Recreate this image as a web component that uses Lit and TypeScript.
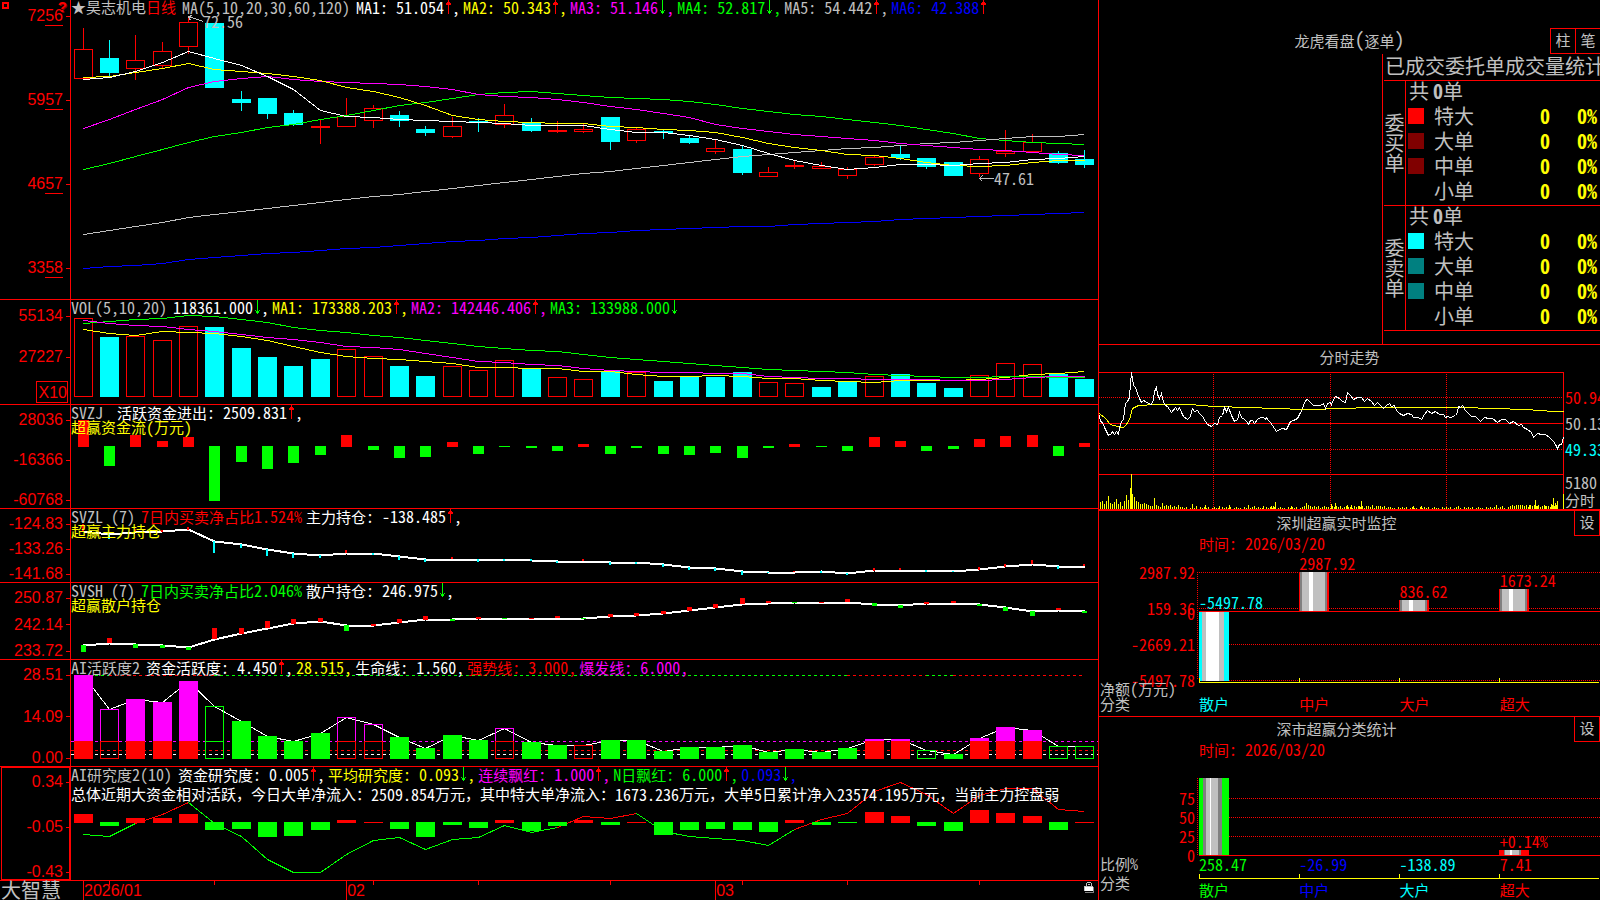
import { LitElement, html, svg, css, nothing } from "lit";
import { customElement, property } from "lit/decorators.js";

const RED = "#f00";
const CYAN = "#0ff";
const GREEN = "#0f0";
const YELLOW = "#ff0";
const MAGENTA = "#f0f";
const WHITE = "#fff";
const GRAY = "#c0c0c0";
const BLUE = "#00f";

/* Shared type styles: CJK runs at 15px, Latin runs in half-width figures. */
const textStyles = css`
  :host {
    font-family: "Noto Sans CJK SC", sans-serif;
    font-size: 15px;
    line-height: 15px;
    font-weight: 400;
    color: #c0c0c0;
  }
  .latin {
    font-size: 16px;
    font-feature-settings: "hwid";
    white-space: pre;
  }
  .red { color: #f00; }
  .cyan { color: #0ff; }
  .green { color: #0f0; }
  .yellow { color: #ff0; }
  .magenta { color: #f0f; }
  .white { color: #fff; }
  .gray { color: #c0c0c0; }
  .blue { color: #00f; }
  svg { display: block; }
`;

const mix = (text: string) =>
  text
    .split(/([\x20-\x7e]+)/)
    .filter((part) => part !== "")
    .map((part) => (/^[\x20-\x7e]/.test(part) ? html`<span class="latin">${part}</span>` : part));

/* ---------- time series ---------- */

const LEFT = 71;
const WIDTH = 1027;
const cx = (i: number) => Math.floor(83 + i * 26.368);

// Each chart's levels are stored in thirds of a unit from the chart's datum.
const level = (datum: number) => (z: number) => datum + Math.round(z / 3);

const rect = (x: number, y: number, w: number, h: number, fill: string) =>
  svg`<rect x=${x} y=${y} width=${w} height=${Math.max(h, 1)} fill=${fill} />`;

const hollow = (x: number, y: number, w: number, h: number, stroke: string) =>
  svg`<rect x=${x + 0.5} y=${y + 0.5} width=${w - 1} height=${Math.max(h - 1, 1)} fill="none" stroke=${stroke} />`;

const line = (values: number[], y: (z: number) => number, stroke: string, from = 0, width = 1) =>
  svg`<polyline fill="none" stroke=${stroke} stroke-width=${width}
    points=${values.map((v, i) => `${cx(i + from) + 0.5},${y(v) + 0.5}`).join(" ")} />`;

const dash = (x1: number, x2: number, y: number, stroke: string, pattern = "3 3") =>
  svg`<line x1=${x1} x2=${x2} y1=${y + 0.5} y2=${y + 0.5} stroke=${stroke} stroke-dasharray=${pattern} />`;

// [rising, high, body top, body bottom, low]
const CANDLES: [number, number, number, number, number][] = [
  [1, 28, 49, 78, 78], [0, 40, 58, 73, 76], [1, 35, 60, 68, 80], [1, 42, 51, 65, 68], [1, 17, 22, 46, 54],
  [0, 23, 23, 88, 88], [0, 91, 99, 103, 111], [0, 98, 98, 114, 119], [0, 110, 113, 125, 126], [1, 120, 126, 127, 144],
  [1, 98, 116, 126, 127], [1, 105, 108, 120, 128], [0, 111, 115, 121, 127], [0, 126, 129, 133, 136], [1, 117, 126, 136, 138],
  [0, 118, 121, 123, 132], [1, 104, 115, 124, 128], [0, 118, 122, 131, 132], [1, 121, 130, 131, 133], [1, 123, 129, 131, 133],
  [0, 117, 117, 142, 150], [1, 128, 129, 140, 143], [0, 129, 131, 133, 139], [0, 136, 138, 143, 144], [1, 140, 148, 151, 154],
  [0, 146, 149, 173, 175], [1, 167, 172, 176, 176], [1, 161, 165, 165, 169], [1, 162, 166, 168, 168], [1, 167, 169, 175, 179],
  [1, 156, 157, 164, 166], [0, 146, 154, 158, 160], [0, 158, 158, 167, 169], [0, 162, 162, 176, 176], [1, 156, 159, 173, 177],
  [1, 130, 151, 153, 157], [1, 134, 142, 151, 151], [0, 151, 153, 163, 164], [0, 150, 159, 165, 168],
];

const MA: [string, number[]][] = [
  [BLUE, [805, 799, 794, 788, 778, 772, 766, 760, 757, 751, 745, 740, 735, 730, 724, 721, 715, 710, 706, 700, 697, 691, 688, 685, 682, 679, 677, 673, 670, 667, 662, 658, 655, 652, 649, 646, 643, 640, 636]],
  [GREEN, [508, 490, 468, 448, 427, 409, 397, 382, 371, 358, 344, 331, 316, 307, 293, 283, 277, 274, 280, 286, 292, 295, 298, 303, 313, 325, 334, 342, 349, 357, 367, 376, 387, 400, 415, 421, 425, 429, 433]],
  [GRAY, [703, 691, 679, 667, 652, 643, 634, 625, 616, 606, 598, 589, 583, 574, 565, 556, 547, 538, 529, 520, 512, 503, 494, 485, 478, 468, 463, 455, 450, 444, 440, 434, 430, 426, 420, 415, 409, 407, 403]],
  [MAGENTA, [385, 358, 328, 298, 262, 244, 233, 229, 236, 243, 247, 249, 253, 259, 268, 282, 287, 292, 298, 307, 318, 327, 340, 351, 372, 384, 394, 403, 409, 415, 421, 430, 435, 441, 448, 451, 456, 461, 466]],
  [YELLOW, [232, 228, 217, 205, 190, 206, 213, 219, 229, 241, 262, 273, 291, 315, 344, 358, 362, 367, 370, 370, 377, 382, 387, 391, 397, 411, 430, 440, 450, 462, 466, 474, 485, 494, 499, 494, 486, 481, 481]],
  [WHITE, [236, 231, 213, 187, 154, 175, 194, 228, 268, 330, 349, 352, 357, 361, 364, 366, 370, 376, 376, 376, 387, 397, 397, 405, 417, 436, 458, 481, 496, 508, 500, 491, 491, 494, 490, 486, 478, 475, 469]],
];

const candleChart = () => {
  const y = level(0);
  return svg`
    ${CANDLES.map(([up, hi, top, bottom, lo], i) => {
      const x = cx(i);
      return up
        ? svg`${rect(x, hi, 1, top - hi, RED)}${lo > bottom ? rect(x, bottom, 1, lo - bottom, RED) : nothing}${hollow(x - 9, top, 19, bottom - top + 1, RED)}`
        : svg`${rect(x, hi, 1, lo - hi, CYAN)}${rect(x - 9, top, 19, bottom - top, CYAN)}`;
    })}
    ${MA.map(([color, values]) => line(values, y, color))}
    <path d="M203.5 21.5 L188.5 16.5 M192.5 15.5 L188.5 16.5 L190.5 20.5 M993.5 178.5 H979.5 M982.5 175.5 L979.5 178.5 L982.5 181.5" fill="none" stroke=${GRAY} />
  `;
};

const VOL = "r84 c141 r138 r150 r108 c111 c174 c201 c228 c207 r177 r198 c228 c258 r228 r240 r210 c237 r261 r267 c243 r246 c273 c261 c261 c246 r276 r279 c291 c276 r258 c252 c279 c294 r255 r219 r222 c252 c267".split(" ");
const VOL_MA: [string, number[]][] = [
  [YELLOW, [118, 128, 136, 124, 127, 130, 139, 150, 167, 187, 199, 203, 208, 214, 218, 231, 232, 235, 235, 243, 243, 253, 259, 259, 256, 259, 265, 265, 271, 274, 277, 271, 271, 271, 267, 261, 253, 250, 244]],
  [GREEN, [100, 94, 88, 85, 76, 79, 87, 97, 110, 120, 126, 134, 142, 150, 160, 168, 175, 180, 184, 193, 202, 208, 214, 220, 226, 232, 238, 241, 244, 247, 252, 256, 259, 260, 262, 259, 259, 262, 260]],
  [MAGENTA, [91, 99, 105, 109, 118, 124, 133, 142, 147, 157, 167, 172, 178, 190, 202, 214, 217, 223, 226, 233, 240, 244, 247, 247, 249, 250, 259, 262, 265, 265, 268, 268, 268, 271, 271, 267, 262, 259, 259]],
];

const volumeChart = () => {
  const y = level(290);
  return svg`
    ${VOL.map((bar, i) => {
      const top = y(Number(bar.slice(1)));
      return bar[0] === "r" ? hollow(cx(i) - 9, top, 19, 397 - top, RED) : rect(cx(i) - 9, top, 19, 397 - top, CYAN);
    })}
    ${VOL_MA.map(([color, values]) => line(values, y, color))}
  `;
};

// Bars that hang from or stand on a zero line; below zero is green.
const zeroBars = (values: number[], datum: number, zero: number, width: number) => {
  const y = level(datum);
  return values.map((v, i) => {
    const x = cx(i) - (width - 1) / 2;
    return v <= zero ? rect(x, y(v), width, y(zero) + 1 - y(v), RED) : rect(x, y(zero), width, y(v) - y(zero), GREEN);
  });
};

const FLOW = [390, 528, 435, 453, 441, 633, 516, 537, 519, 495, 435, 480, 504, 501, 456, 492, 471, 474, 483, 462, 492, 474, 492, 495, 489, 504, 474, 462, 471, 483, 441, 453, 483, 477, 447, 438, 435, 498, 459];

const HOLD_MAIN = [722, 732, 727, 723, 717, 752, 763, 777, 789, 795, 789, 790, 799, 806, 806, 807, 808, 811, 813, 813, 816, 817, 823, 831, 834, 844, 846, 845, 844, 849, 840, 839, 840, 843, 838, 829, 821, 828, 828];
const HOLD_MAIN_TICKS: [number, number, number][] = [
  [1, 732, 747], [5, 752, 789], [6, 763, 774], [7, 777, 798], [8, 790, 804], [9, 795, 804], [11, 788, 794], [12, 798, 810], [13, 807, 816],
  [15, 807, 816], [16, 808, 812], [17, 808, 812], [18, 813, 819], [20, 816, 825], [21, 815, 821], [22, 822, 831], [23, 831, 840], [24, 834, 843],
  [25, 843, 855], [26, 846, 849], [28, 843, 849], [29, 849, 855], [32, 839, 846], [33, 843, 846], [37, 828, 837],
];
const HOLD_MAIN_RED: [number, number, number][] = [
  [0, 702, 724], [2, 718, 726], [3, 720, 726], [4, 711, 720], [10, 780, 789], [14, 801, 807], [19, 808, 812], [27, 843, 846],
  [30, 834, 843], [31, 834, 839], [34, 831, 839], [35, 822, 831], [36, 810, 822], [38, 822, 828],
];
const HOLD_RETAIL = [226, 218, 223, 226, 232, 206, 190, 173, 160, 154, 165, 165, 157, 148, 147, 145, 144, 144, 144, 144, 139, 136, 130, 121, 112, 101, 98, 96, 96, 96, 101, 105, 100, 98, 102, 112, 123, 120, 124];
const HOLD_RETAIL_RED: [number, number, number][] = [
  [1, 204, 218], [5, 174, 207], [6, 174, 191], [7, 153, 173], [8, 147, 161], [9, 143, 155], [11, 163, 167], [12, 147, 158], [13, 138, 149],
  [15, 141, 147], [17, 144, 147], [18, 138, 144], [20, 132, 141], [21, 129, 138], [22, 123, 132], [23, 111, 123], [24, 102, 114], [25, 84, 102],
  [26, 93, 98], [28, 95, 99], [29, 87, 96], [32, 95, 101], [33, 93, 98], [37, 114, 120],
];
const HOLD_RETAIL_GREEN: [number, number, number][] = [
  [0, 225, 246], [2, 222, 234], [3, 226, 233], [4, 231, 240], [10, 165, 183], [14, 147, 153], [16, 143, 147], [19, 143, 147], [27, 95, 99],
  [30, 99, 108], [31, 105, 114], [34, 101, 108], [35, 111, 123], [36, 123, 138], [38, 122, 129],
];

const spans = (items: [number, number, number][], datum: number, width: number, color: string) => {
  const y = level(datum);
  return items.map(([i, a, b]) => rect(cx(i) - (width >> 1), y(a), width, y(b) - y(a), color));
};

// M/m: burst bar filled/hollow, G/g: weak bar filled/hollow, r: hollow red
const ACTIVE = "M315 m417 M387 M396 M333 g408 G453 G498 G513 G489 m441 m462 G501 G534 G495 G510 m474 G516 G525 r525 G510 G510 G543 G531 G531 G525 G546 G537 G546 G534 M507 M507 g540 G552 M504 M471 M480 g528 g528".split(" ");

const activeChart = () => {
  const y = level(570);
  const tops = ACTIVE.map((b) => Number(b.slice(1)));
  const cap: [number, number, string][] = [[0, 1, GREEN], [1, 5, RED], [5, 29, GREEN], [29, 32, RED], [32, 33, GREEN], [33, 38, RED]];
  return svg`
    ${cap.map(([a, b, color]) => dash(cx(a), cx(b), 675, color))}
    ${dash(LEFT, 1098, 741, MAGENTA)}${dash(LEFT, 1098, 750, RED)}${dash(LEFT, 1098, 754, WHITE)}
    ${line(tops, y, WHITE)}
    ${ACTIVE.map((bar, i) => {
      const x = cx(i) - 9;
      const top = y(tops[i]);
      switch (bar[0]) {
        case "M": return svg`${rect(x, top, 19, 741 - top, MAGENTA)}${rect(x, 741, 19, 18, RED)}`;
        case "m": return svg`${hollow(x, top, 19, 742 - top, MAGENTA)}${hollow(x, 741, 19, 18, RED)}`;
        case "G": return rect(x, top, 19, 759 - top, GREEN);
        case "r": return hollow(x, top, 19, 759 - top, RED);
        default: return svg`${hollow(x, top, 19, 759 - top, GREEN)}${top < 741 ? rect(x, 741, 19, 1, GREEN) : nothing}`;
      }
    })}
  `;
};

const STUDY_BARS = [732, 768, 744, 744, 732, 780, 777, 801, 798, 780, 750, 756, 777, 801, 765, 774, 750, 783, 768, 750, 765, 756, 795, 780, 777, 780, 786, 750, 765, 759, 726, 738, 768, 783, 720, 729, 738, 780, 756];
const STUDY = [793, 799, 760, 733, 697, 758, 797, 867, 907, 907, 853, 809, 802, 836, 806, 802, 766, 787, 771, 738, 743, 730, 782, 797, 805, 811, 824, 776, 748, 730, 662, 637, 671, 730, 674, 653, 653, 718, 724];

const studyChart = () => {
  const y = level(570);
  const parts: [number, number, string][] = [[0, 2, GREEN], [2, 4, RED], [4, 18, GREEN], [18, 21, RED], [21, 27, GREEN], [27, 38, RED]];
  return svg`
    ${parts.map(([a, b, color]) => line(STUDY.slice(a, b + 1), y, color, a))}
    ${zeroBars(STUDY_BARS, 570, 756, 19)}
  `;
};

interface Reading { text: string; color: string; arrow?: "up" | "down"; comma?: boolean }
interface Panel {
  id: string; top: number; height: number; axis: string[]; title: string; readings: Reading[];
  note?: Reading; sub?: string; chart: () => unknown;
}

const r = (text: string, color: string, arrow?: "up" | "down", comma = true): Reading => ({ text, color, arrow, comma });

const PANELS: Panel[] = [
  {
    id: "main", top: 0, height: 299, axis: ["7256", "5957", "4657", "3358"], title: "MA(5,10,20,30,60,120)",
    readings: [r("MA1: 51.054", "white", "up"), r("MA2: 50.343", "yellow", "up"), r("MA3: 51.146", "magenta", "down"), r("MA4: 52.817", "green", "down"), r("MA5: 54.442", "gray", "up"), r("MA6: 42.388", "blue", "up", false)],
    chart: candleChart,
  },
  {
    id: "vol", top: 300, height: 104, axis: ["55134", "27227"], title: "VOL(5,10,20)",
    readings: [r("118361.000", "white", "down"), r("MA1: 173388.203", "yellow", "up"), r("MA2: 142446.406", "magenta", "up"), r("MA3: 133988.000", "green", "down", false)],
    chart: volumeChart,
  },
  {
    id: "svzj", top: 405, height: 103, axis: ["28036", "-16366", "-60768"], title: "SVZJ ",
    readings: [r("活跃资金进出: 2509.831", "white", "up")], sub: "超赢资金流(万元)",
    chart: () => zeroBars(FLOW, 290, 468, 11),
  },
  {
    id: "svzl", top: 509, height: 73, axis: ["-124.83", "-133.26", "-141.68"], title: "SVZL (7)",
    note: { text: "7日内买卖净占比1.524%", color: "red" },
    readings: [r("主力持仓: -138.485", "white", "up")], sub: "超赢主力持仓",
    chart: () => svg`${line(HOLD_MAIN, level(290), WHITE, 0, 2)}${spans(HOLD_MAIN_TICKS, 290, 2, CYAN)}${spans(HOLD_MAIN_RED, 290, 2, RED)}`,
  },
  {
    id: "svsh", top: 583, height: 76, axis: ["250.87", "242.14", "233.72"], title: "SVSH (7)",
    note: { text: "7日内买卖净占比2.046%", color: "green" },
    readings: [r("散户持仓: 246.975", "white", "down")], sub: "超赢散户持仓",
    chart: () => svg`${line(HOLD_RETAIL, level(570), WHITE, 0, 2)}${spans(HOLD_RETAIL_RED, 570, 5, RED)}${spans(HOLD_RETAIL_GREEN, 570, 5, GREEN)}`,
  },
  {
    id: "active", top: 660, height: 106, axis: ["28.51", "14.09", "0.00"], title: "AI活跃度2",
    readings: [r("资金活跃度: 4.450", "white", "up"), r("28.515", "yellow"), r("生命线: 1.560", "white"), r("强势线: 3.000", "red"), r("爆发线: 6.000", "magenta")],
    chart: activeChart,
  },
  {
    id: "study", top: 767, height: 113, axis: ["0.34", "-0.05", "-0.43"], title: "AI研究度2(10)",
    readings: [r("资金研究度: 0.005", "white", "up"), r("平均研究度: 0.093", "yellow", "down"), r("连续飘红: 1.000", "magenta", "up"), r("N日飘红: 6.000", "green", "up"), r("0.093", "blue", "down")],
    chart: studyChart,
  },
];

const COMMENT = "总体近期大资金相对活跃，今日大单净流入：2509.854万元，其中特大单净流入：1673.236万元，大单5日累计净入23574.195万元，当前主力控盘弱";

@customElement("kline-stack")
class KlineStack extends LitElement {
  static styles = [textStyles, css`
    :host {
      display: grid;
      grid-template-rows: 300fr 105fr 104fr 74fr 77fr 107fr 114fr 19fr;
      min-width: 0;
      min-height: 0;
    }
    .panel {
      display: grid;
      grid-template-columns: 71px minmax(0, 1fr);
      border-bottom: 1px solid #f00;
      min-height: 0;
    }
    .axis {
      position: relative;
      display: flex;
      flex-direction: column;
      justify-content: space-between;
      border-right: 1px solid #f00;
      padding-top: 7px;
      font: 16px/16px "Liberation Sans", sans-serif;
      color: #f00;
    }
    .main .axis { padding: 8px 0 23px; }
    .vol .axis { padding: 8px 0 1px; justify-content: flex-start; }
    .vol .mark + .mark { margin-top: 25px; }
    .study .axis { box-shadow: inset 1px 0 #000, inset 2px 1px #f00, inset 0 -1px #f00, inset -1px 0 #f00; }
    .mark {
      display: flex;
      justify-content: flex-end;
      align-items: center;
      gap: 3px;
    }
    .mark::after {
      content: "";
      width: 4px;
      height: 1px;
      background: #f00;
    }
    .cents {
      border-bottom: 1px solid #f00;
      padding-bottom: 1px;
    }
    .unit {
      align-self: flex-end;
      margin: auto 2px 0 0;
      border: 1px solid #f00;
      padding: 3px 0 1px 2px;
    }
    .help {
      position: absolute;
      top: 1px;
      right: 3px;
      padding: 0;
      border: 0;
      background: none;
      font: bold 15px/12px "Liberation Sans", sans-serif;
      color: #f00;
      text-shadow: 1px 1px #800000;
    }
    .corner {
      position: absolute;
      top: 2px;
      left: 2px;
      width: 3px;
      height: 3px;
      border: 2px solid #f00;
    }
    .plot {
      position: relative;
      display: grid;
      grid-template: minmax(0, 1fr) / minmax(0, 1fr);
      min-height: 0;
    }
    .plot > * { grid-area: 1 / 1; }
    .plot svg.chart {
      width: 100%;
      height: 100%;
      min-height: 0;
    }
    .head { z-index: 1; }
    .row {
      display: flex;
      white-space: pre;
      height: 15px;
      line-height: 14px;
    }
    .name { margin-right: 6px; }
    .stock { display: flex; margin-right: 6px; }
    .star { width: 15px; }
    .note { margin-right: 4px; }
    .reading { display: flex; margin-right: 3px; }
    .comment { margin-top: 5px; }
    .tag { position: absolute; }
    .foot {
      display: grid;
      grid-template-columns: 71px minmax(0, 1fr) auto;
      font: 16px/19px "Liberation Sans", sans-serif;
      color: #f00;
    }
    .brand {
      font: 400 20px/18px "Noto Sans CJK SC", sans-serif;
      color: #c0c0c0;
      padding-left: 1px;
    }
    .times {
      grid-area: 1 / 2 / 2 / 4;
      display: flex;
      padding-left: 12px;
    }
    .time {
      border-left: 1px solid #f00;
      min-width: 0;
    }
    .small {
      grid-area: 1 / 2 / 2 / 4;
      width: 100%;
      height: 100%;
      min-height: 0;
    }
    .lock {
      grid-area: 1 / 3;
      margin: 1px 3px 0 0;
    }
  `];

  private arrow(dir: "up" | "down") {
    return dir === "up"
      ? html`<svg class="arrow" width="8" height="15" viewBox="0 0 8 15" shape-rendering="crispEdges"><path fill="#f00" d="M4 0h1v14h-1z M3 2h3v1h-3z M2 3h5v2h-5z" /></svg>`
      : html`<svg class="arrow" width="8" height="15" viewBox="0 0 8 15" shape-rendering="crispEdges"><path fill="#0f0" d="M4 0h1v14h-1z M2 10h1v1h1v1h1v-1h1v-1h1v1h-1v2h-3v-2h-1z" /></svg>`;
  }

  private axis(p: Panel) {
    return html`<div class="axis">
      ${p.id === "main" ? html`<i class="corner"></i><button class="help" aria-label="帮助">?</button>` : nothing}
      ${p.axis.map((v) => html`<span class="mark">${p.id === "main" ? html`<span>${v.slice(0, 2)}<span class="cents">${v.slice(2)}</span></span>` : v}</span>`)}
      ${p.id === "vol" ? html`<span class="unit">X10</span>` : nothing}
    </div>`;
  }

  private tag(text: string, x: number, y: number) {
    return html`<span class="tag" style="left:${((x - LEFT) / WIDTH) * 100}%;top:${(y / 299) * 100}%">${mix(text)}</span>`;
  }

  private panel(p: Panel) {
    return html`<section class="panel ${p.id}">
      ${this.axis(p)}
      <div class="plot">
        <svg class="chart" viewBox="${LEFT} ${p.top} ${WIDTH} ${p.height}" preserveAspectRatio="none" shape-rendering="crispEdges">${p.chart()}</svg>
        <div class="head">
          <div class="row">
            ${p.id === "main" ? html`<span class="stock"><span class="star">★</span><span>昊志机电</span><span class="red">日线</span></span>` : nothing}
            <span class="name">${mix(p.title)}</span>
            ${p.note ? html`<span class="note ${p.note.color}">${mix(p.note.text)}</span>` : nothing}
            ${p.readings.map((v) => html`<span class="reading ${v.color}"><span>${mix(v.text)}</span>${v.arrow ? this.arrow(v.arrow) : nothing}${v.comma ? mix(",") : nothing}</span>`)}
          </div>
          ${p.sub ? html`<div class="row yellow">${mix(p.sub)}</div>` : nothing}
          ${p.id === "study" ? html`<div class="row comment white">${mix(COMMENT)}</div>` : nothing}
        </div>
        ${p.id === "main" ? html`${this.tag("72.56", 203, 14)}${this.tag("47.61", 994, 171)}` : nothing}
      </div>
    </section>`;
  }

  render() {
    return html`
      ${PANELS.map((p) => this.panel(p))}
      <footer class="foot">
        <span class="brand">大智慧</span>
        <svg class="small" viewBox="${LEFT} 881 ${WIDTH} 19" preserveAspectRatio="none" shape-rendering="crispEdges">
          ${[1, 5, 11, 15, 20, 25, 29, 34].map((i) => rect(cx(i), 881, 1, 4, RED))}
        </svg>
        <div class="times">
          ${([["2026/01", 263], ["02", 369], ["03", 383]] as [string, number][]).map(([t, w]) => html`<span class="time" style="flex:${w} 1 0">${t}</span>`)}
        </div>
        <svg class="lock" width="11" height="12" viewBox="0 0 11 12" shape-rendering="crispEdges">
          <path fill="#c0c0c0" d="M3 0h4v1h-4z M2 1h1v3h-1z M7 1h1v3h-1z M4 2h2v1h-2z" />
          <path fill="#808080" d="M1 10h9v1h-9z M9 5h1v6h-1z" />
          <path fill="#fff" d="M1 4h8v5h-8z" />
          <path fill="#c0c0c0" d="M0 4h1v5h-1z M0 4h9v1h-9z" />
        </svg>
      </footer>
    `;
  }
}

/* ---------- entrusted orders table ---------- */

@customElement("order-stats")
class OrderStats extends LitElement {
  static styles = [textStyles, css`
    :host {
      display: flex;
      flex-direction: column;
      min-height: 0;
      border-bottom: 1px solid #f00;
      padding-top: 28px;
      overflow: hidden;
    }
    .bar {
      display: grid;
      grid-template-columns: 50px 1fr 50px;
      height: 26px;
      flex: none;
    }
    h2 {
      grid-column: 2;
      margin: 0;
      font: inherit;
      line-height: 22px;
      text-align: center;
    }
    .tabs { display: flex; }
    button {
      flex: 1;
      border: 1px solid #f00;
      border-right: 0;
      padding: 0 0 4px;
      background: #000;
      color: #c0c0c0;
      font: inherit;
    }
    .body {
      flex: 1;
      align-self: flex-end;
      width: 218px;
      border-left: 1px solid #f00;
      padding-left: 1px;
      box-sizing: border-box;
      font-size: 20px;
      line-height: 20px;
    }
    h3 {
      margin: 0;
      height: 26px;
      padding-left: 1px;
      font: inherit;
      line-height: 23px;
      white-space: nowrap;
      border-bottom: 1px solid #f00;
    }
    table {
      width: 216px;
      table-layout: fixed;
      border-spacing: 0;
    }
    .latin { font-size: 20px; }
    th, td {
      padding: 0 0 5px;
      font-weight: 400;
      text-align: left;
      height: 20px;
      white-space: nowrap;
    }
    tbody th.side {
      border-right: 1px solid #f00;
      border-bottom: 1px solid #f00;
      padding: 0;
      white-space: normal;
      text-align: center;
    }
    tr.last > td, tr.last > th {
      height: 19px;
      line-height: 19px;
      border-bottom: 1px solid #f00;
    }
    .c1 { width: 22px; }
    .c2 { width: 28px; }
    .c3 { width: 46px; }
    .c4 { width: 70px; }
    .num {
      text-align: right;
      color: #ff0;
    }
    .num:last-child { padding-right: 3px; }
    .num .latin { font-weight: 700; }
    .sum { padding-left: 3px; }
    .sum .latin { font-weight: 700; margin-left: 4px; }
    .swatch {
      display: block;
      width: 16px;
      height: 16px;
      margin-left: 2px;
    }
    .r1 { background: #f00; }
    .r2 { background: #800000; }
    .s1 { background: #0ff; }
    .s2 { background: #008080; }
  `];

  private side(label: string, swatches: string[]) {
    const names = ["特大", "大单", "中单", "小单"];
    return html`<tbody>
      <tr><th class="side" rowspan="5" scope="rowgroup">${[...label].map((c, i) => html`${i ? html`<br>` : nothing}${c}`)}</th><td class="sum" colspan="4">共${mix("0")}单</td></tr>
      ${names.map((n, i) => html`<tr class=${i === 3 ? "last" : ""}>
        <td>${swatches[i] ? html`<i class="swatch ${swatches[i]}"></i>` : nothing}</td>
        <th scope="row">${n}</th>
        <td class="num">${mix("0")}</td>
        <td class="num">${mix("0%")}</td>
      </tr>`)}
    </tbody>`;
  }

  render() {
    return html`
      <div class="bar">
        <h2>${mix("龙虎看盘(逐单)")}</h2>
        <div class="tabs"><button>柱</button><button>笔</button></div>
      </div>
      <div class="body">
        <h3 id="orders">已成交委托单成交量统计</h3>
        <table aria-labelledby="orders">
          <colgroup><col class="c1"><col class="c2"><col class="c3"><col class="c4"><col></colgroup>
          ${this.side("委买单", ["r1", "r2", "r2"])}
          ${this.side("委卖单", ["s1", "s2", "s2"])}
        </table>
      </div>
    `;
  }
}

/* ---------- intraday ---------- */

const PRICE = "27,225 31,243 36,246 42,262 48,274 55,284 62,280 66,272 72,282 78,274 84,283 88,262 94,243 98,236 102,210 106,190 112,182 117,172 120,130 124,97 130,136 136,142 142,160 148,175 154,186 160,180 166,182 174,189 184,193 190,178 193,152 197,142 202,162 208,173 214,160 220,186 226,194 232,198 238,208 244,217 254,202 260,209 266,202 274,216 280,228 290,236 300,229 306,205 312,212 320,211 328,218 336,229 344,243 352,252 362,257 372,248 382,253 388,232 396,224 402,200 408,213 414,202 422,224 432,244 440,238 446,216 454,230 462,238 468,242 475,252 480,240 486,241 493,250 500,236 510,232 520,231 524,237 527,230 534,241 540,247 546,256 552,265 557,273 566,267 576,264 588,266 594,256 600,244 610,241 622,234 628,222 636,207 640,195 645,180 650,177 660,186 668,195 680,194 690,196 698,189 704,204 710,190 720,185 724,193 730,178 736,167 746,174 756,184 764,186 769,172 772,157 780,164 790,178 800,171 814,171 822,183 832,175 844,184 852,194 860,187 872,197 880,203 888,195 896,190 904,198 912,195 918,210 928,219 940,224 952,219 964,222 970,232 984,231 994,238 1002,222 1012,210 1024,220 1034,213 1046,221 1060,221 1066,232 1072,228 1080,231 1094,225 1100,217 1104,198 1110,200 1117,195 1124,211 1134,220 1144,228 1156,228 1170,242 1182,232 1194,235 1206,235 1220,247 1232,238 1246,238 1256,248 1270,243 1284,256 1292,252 1300,260 1312,266 1324,275 1330,290 1340,278 1354,283 1364,281 1378,290 1390,304 1396,312 1402,323 1408,312 1413,312 1420,290";
const AVERAGE = "27,219 45,234 60,252 80,259 98,260 108,252 118,238 125,204 145,196 195,193 298,193 372,197 475,200 555,204 640,206 778,205 820,202 1115,202 1210,205 1305,206 1350,210 1390,213 1420,214";

const opening = [21, 23, 15, 24, 39, 18, 15, 21, 30, 15, 21, 10, 24, 42, 27, 63, 45, 36, 24, 21, 15, 15, 18, 15, 12, 9, 9, 33, 12, 9, 6, 18, 9, 12, 9, 12, 6, 9, 6, 12, 6];
const peaks: Record<number, number> = {
  307: 15, 319: 9, 346: 12, 388: 9, 418: 12, 475: 12, 493: 9, 520: 9, 544: 9, 550: 9, 556: 21, 604: 9, 643: 9, 649: 18, 655: 12, 724: 15, 736: 18,
  772: 12, 784: 12, 808: 9, 814: 24, 829: 9, 847: 12, 865: 9, 970: 9, 994: 9, 1105: 9, 1219: 12, 1237: 9, 1285: 12, 1291: 12, 1303: 9, 1309: 12,
  1318: 12, 1336: 27, 1342: 9, 1366: 9, 1384: 15, 1390: 33, 1396: 18, 1402: 24, 1420: 45, 124: 105,
};
const hum = [6, 3, 6, 0, 3, 6, 3, 3, 0, 6, 3];

const ticksOfVolume = (): [number, number][] => {
  const out: [number, number][] = opening.map((h, i) => [31 + i * 6, h]);
  for (let x = 277, i = 0; x < 1402; x += 6, i++) {
    const busy = x > 1260 ? 6 : x > 640 && x < 900 ? 3 : 0;
    out.push([x, hum[i % hum.length] + busy]);
  }
  for (const k of Object.keys(peaks)) out.push([Number(k), peaks[Number(k)]]);
  return out.filter(([, h]) => h > 0);
};

const place = (points: string) =>
  points.split(" ").map((p) => {
    const [x, y] = p.split(",").map(Number);
    return `${Math.round(x / 3) + 0.5},${Math.round(y / 3) + 0.5}`;
  }).join(" ");

@customElement("intraday-chart")
class IntradayChart extends LitElement {
  static styles = [textStyles, css`
    :host {
      display: flex;
      flex-direction: column;
      min-height: 0;
      border-bottom: 1px solid #f00;
      overflow: hidden;
    }
    h2 {
      margin: 0;
      font: inherit;
      line-height: 23px;
      height: 27px;
      text-align: center;
    }
    .body {
      flex: 1;
      min-height: 0;
      display: grid;
      grid-template: minmax(0, 1fr) / minmax(0, 1fr) 36px;
    }
    svg { width: 100%; height: 100%; }
    .scale {
      display: flex;
      flex-direction: column;
      padding: 12px 0 0 1px;
      line-height: 26px;
    }
    .scale .latin { display: block; }
    .foot { line-height: 17px; margin-top: 12px; }
  `];

  render() {
    return html`
      <h2>分时走势</h2>
      <div class="body">
        <svg viewBox="9 32 465 137" preserveAspectRatio="none" shape-rendering="crispEdges">
          ${[57, 109].map((y) => dash(9, 473, y, RED, "1 1"))}
          ${[123, 240, 356].map((x) => svg`<line x1=${x + 0.5} x2=${x + 0.5} y1="32" y2="169" stroke=${RED} stroke-dasharray="1 1" />`)}
          ${[32, 83, 134].map((y) => rect(9, y, 465, 1, RED))}
          ${rect(473, 32, 1, 137, RED)}
          ${ticksOfVolume().map(([x, h]) => rect(Math.floor(x / 3), 169 - Math.round(h / 3), 1, Math.round(h / 3), YELLOW))}
          <polyline fill="none" stroke=${YELLOW} points=${place(AVERAGE)} />
          <polyline fill="none" stroke=${WHITE} points=${place(PRICE)} />
        </svg>
        <div class="scale">
          <span class="red">${mix("50.94")}</span>
          <span>${mix("50.13")}</span>
          <span class="cyan">${mix("49.33")}</span>
          <div class="foot">${mix("5180")}分时</div>
        </div>
      </div>
    `;
  }
}

/* ---------- investor class bars ---------- */

interface Stripe { w: number; fill: string }
interface Column { name: string; color: string; top?: number; bottom?: number; stripes?: Stripe[]; label?: string; labelTop?: number; value?: string }
interface ClassChart {
  kind: string; title: string; top: number; height: number; ticks: string[]; grid: number[]; solid: number; axis: number; from: number;
  names: string[]; columns: Column[]; zero?: boolean;
}

const stripes = (...parts: [number, string][]): Stripe[] => parts.map(([w, fill]) => ({ w, fill }));
const DARK = "#808080";
const silver = stripes([1, RED], [2, DARK], [7, GRAY], [4, WHITE], [12, GRAY], [2, DARK], [2, RED]);

const MONITOR: ClassChart = {
  kind: "monitor", title: "深圳超赢实时监控", top: 552, height: 145, ticks: ["2987.92", "159.36", "-2669.21", "-5497.78"],
  grid: [572, 608, 644, 680], solid: 611, axis: 682, from: 572, names: ["净额(万元)", "分类"], zero: true,
  columns: [
    { name: "散户", color: "cyan", top: 612, bottom: 681, stripes: stripes([3, CYAN], [4, GRAY], [13, WHITE], [5, GRAY], [5, CYAN]), label: "-5497.78", labelTop: 611 },
    { name: "中户", color: "red", top: 572, bottom: 611, stripes: silver, label: "2987.92", labelTop: 572 },
    { name: "大户", color: "red", top: 600, bottom: 611, stripes: silver, label: "836.62", labelTop: 600 },
    { name: "超大", color: "red", top: 589, bottom: 611, stripes: silver, label: "1673.24", labelTop: 589 },
  ],
};

const RATIO: ClassChart = {
  kind: "ratio", title: "深市超赢分类统计", top: 758, height: 125, ticks: ["75", "50", "25", "0"],
  grid: [798, 817, 836], solid: 855, axis: 878, from: 778, names: ["比例%", "分类"],
  columns: [
    { name: "散户", color: "green", top: 778, bottom: 855, stripes: stripes([4, GREEN], [3, DARK], [4, GRAY], [1, WHITE], [7, GRAY], [4, DARK], [7, GREEN]), value: "258.47" },
    { name: "中户", color: "blue", value: "-26.99" },
    { name: "大户", color: "cyan", value: "-138.89" },
    { name: "超大", color: "red", top: 850, bottom: 855, stripes: stripes([5, RED], [1, DARK], [5, GRAY], [2, WHITE], [7, GRAY], [2, DARK], [8, RED]), label: "+0.14%", labelTop: 850, value: "7.41" },
  ],
};

@customElement("class-chart")
class ClassChartView extends LitElement {
  @property({ attribute: false }) chart!: ClassChart;

  static styles = [textStyles, css`
    :host {
      display: flex;
      flex-direction: column;
      min-height: 0;
      overflow: hidden;
    }
    .bar {
      display: grid;
      grid-template-columns: 1fr 26px;
      height: 25px;
    }
    h2 {
      margin: 0;
      font: inherit;
      line-height: 23px;
      text-align: center;
    }
    button {
      padding: 0 0 3px;
      border: 1px solid #f00;
      border-top: 0;
      background: #000;
      color: #c0c0c0;
      font: inherit;
    }
    .date {
      height: 16px;
      line-height: 14px;
      padding-left: 100px;
    }
    .body {
      flex: 1;
      min-height: 0;
      display: grid;
      grid-template: minmax(0, 1fr) / 98px minmax(0, 1fr);
      line-height: 14px;
    }
    .left, .right {
      display: flex;
      flex-direction: column;
      min-height: 0;
    }
    .ticks {
      position: relative;
      flex: 1;
      display: flex;
      flex-direction: column;
      justify-content: space-between;
      align-items: flex-end;
      padding: 13px 2px 0 0;
    }
    .tick { height: 16px; }
    .zero {
      position: absolute;
      right: 2px;
      top: 54px;
    }
    .names {
      position: relative;
      margin-top: -8px;
      padding: 0 0 3px 1px;
    }
    .names div { height: 16px; }
    .ratio .ticks { padding-top: 33px; }
    .ratio .names { margin-top: -9px; padding-bottom: 7px; line-height: 17px; }
    .ratio .names div { height: 19px; }
    .plot {
      position: relative;
      flex: 1;
      min-height: 0;
      display: grid;
      grid-template: minmax(0, 1fr) / minmax(0, 1fr);
    }
    .plot svg { width: 100%; height: 100%; min-height: 0; }
    .overlay {
      position: absolute;
      inset: 0;
      display: grid;
      grid-template-columns: repeat(4, minmax(0, 1fr));
      padding-left: 2px;
    }
    .slot { position: relative; }
    .label, .value { position: absolute; left: 0; height: 16px; }
    .value { bottom: 10px; }
    .cats {
      display: grid;
      grid-template-columns: repeat(4, minmax(0, 1fr));
      padding: 0 0 3px 2px;
      height: 16px;
    }
    .ratio .cats { padding-bottom: 1px; }
  `];

  render() {
    const c = this.chart;
    return html`
      <div class="bar"><h2>${c.title}</h2><button>设</button></div>
      <div class="date red">${mix("时间: 2026/03/20")}</div>
      <div class="body ${c.kind}">
        <div class="left">
          <div class="ticks red">
            ${c.ticks.map((t) => html`<span class="tick">${mix(t)}</span>`)}
            ${c.zero ? html`<span class="zero">${mix("0")}</span>` : nothing}
          </div>
          <div class="names">${c.names.map((n) => html`<div>${mix(n)}</div>`)}</div>
        </div>
        <div class="right">
          <div class="plot">
            <svg viewBox="1197 ${c.top} 403 ${c.height}" preserveAspectRatio="none" shape-rendering="crispEdges">
              ${c.grid.map((y) => dash(1199, 1600, y, RED, "1 1"))}
              <line x1="1197.5" x2="1197.5" y1=${c.from} y2=${c.kind === "ratio" ? 855 : 680} stroke=${RED} stroke-dasharray="1 1" />
              ${c.columns.map((col, i) => {
                let x = 1199 + i * 100;
                return (col.stripes ?? []).map((s) => {
                  const part = rect(x, col.top!, s.w, col.bottom! - col.top!, s.fill);
                  x += s.w;
                  return part;
                });
              })}
              ${rect(1199, c.solid, 401, 1, RED)}
              ${rect(1199, c.axis, 400, 1, YELLOW)}
              ${c.columns.map((_, i) => rect(1199 + i * 100, c.axis - 4, 1, 4, YELLOW))}
            </svg>
            <div class="overlay">
              ${c.columns.map((col) => html`<div class="slot">
                ${col.label ? html`<span class="label ${col.color}" style="bottom:${((c.top + c.height - col.labelTop!) / c.height) * 100}%">${mix(col.label)}</span>` : nothing}
                ${col.value ? html`<span class="value ${col.color}">${mix(col.value)}</span>` : nothing}
              </div>`)}
            </div>
          </div>
          <div class="cats">${c.columns.map((col) => html`<span class=${col.color}>${col.name}</span>`)}</div>
        </div>
      </div>
    `;
  }
}

@customElement("app-root")
class AppRoot extends LitElement {
  static styles = css`
    :host {
      display: grid;
      grid-template: minmax(0, 1fr) / minmax(0, 1098fr) minmax(0, 502fr);
      height: 100vh;
      min-height: 640px;
      background: #000;
      overflow: hidden;
    }
    .side {
      display: grid;
      grid-template-rows: 345fr 165fr 207fr 183fr;
      border-left: 1px solid #f00;
      min-width: 0;
      min-height: 0;
    }
    .monitor {
      border-top: 1px solid #f00;
      border-bottom: 1px solid #f00;
    }
  `;

  render() {
    return html`
      <kline-stack></kline-stack>
      <aside class="side">
        <order-stats></order-stats>
        <intraday-chart></intraday-chart>
        <class-chart class="monitor" .chart=${MONITOR}></class-chart>
        <class-chart .chart=${RATIO}></class-chart>
      </aside>
    `;
  }
}
